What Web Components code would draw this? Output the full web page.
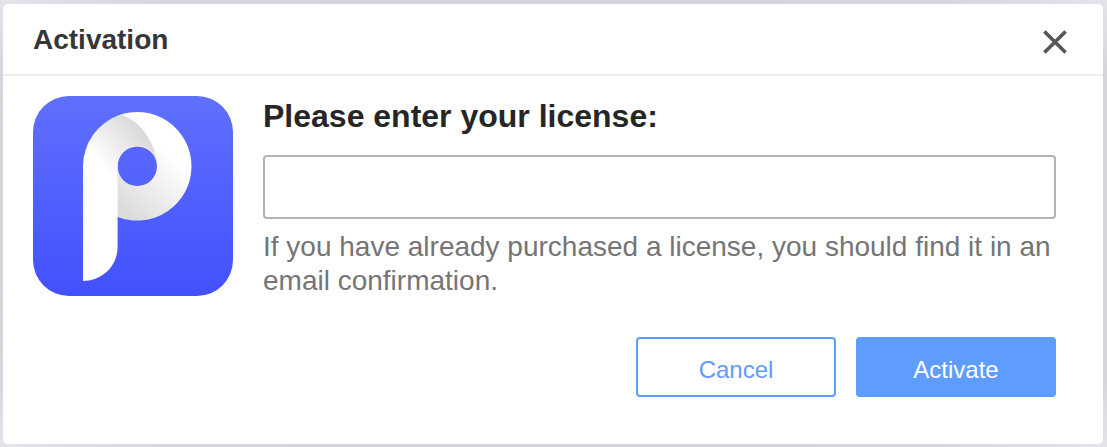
<!DOCTYPE html>
<html lang="en">
<head>
  <meta charset="utf-8">
  <meta name="viewport" content="width=device-width, initial-scale=1">
  <title>Activation</title>
  <style>
    html {
      height: 100%;
    }

    body {
      box-sizing: border-box;
      min-height: 100%;
      margin: 0;
      padding: 4px 4px 3px 3px;
      display: flex;
      background: radial-gradient(ellipse at center, #d2d2d7 0%, #d6d5db 85%, #e6e4ea 100%);
      font-family: "Liberation Sans", Helvetica, Arial, sans-serif;
    }

    modal-dialog {
      flex: 1;
    }
  </style>
</head>
<body>
  <modal-dialog title="Activation">
    <app-logo slot="icon"></app-logo>
    <license-field
      label="Please enter your license:"
      hint="If you have already purchased a license, you should find it in an email confirmation.">
    </license-field>
    <action-button slot="actions">Cancel</action-button>
    <action-button slot="actions" primary>Activate</action-button>
  </modal-dialog>

  <script>
    class ModalDialog extends HTMLElement {
      constructor() {
        super();
        this.attachShadow({ mode: 'open' });

        const title = this.getAttribute('title') || '';
        this.removeAttribute('title');

        this.shadowRoot.innerHTML = `
          <style>
            :host {
              display: block;
              border-radius: 5px;
              background: #fff;
            }
            header {
              display: flex;
              align-items: center;
              justify-content: space-between;
              height: 70px;
              padding: 0 32px 0 30px;
              border-bottom: 2px solid #ededee;
            }
            h1 {
              margin: 2px 0 0;
              color: #363636;
              font-size: 28px;
              line-height: 32px;
            }
            .close {
              display: flex;
              margin-top: 6px;
              padding: 0;
              border: 0;
              background: none;
              color: #55555c;
              cursor: pointer;
            }
            .content {
              display: flex;
              gap: 30px;
              padding: 20px 47px 0 30px;
            }
            .main {
              flex: 1;
              min-width: 0;
            }
            footer {
              display: flex;
              justify-content: flex-end;
              gap: 20px;
              padding: 39px 47px 47px;
            }
          </style>
          <section role="dialog" aria-labelledby="title">
            <header>
              <h1 id="title">${title}</h1>
              <button class="close" type="button" aria-label="Close">
                <svg width="32" height="32" viewBox="0 0 32 32" fill="none" stroke="currentColor" stroke-width="3.6">
                  <path d="M5.4 5.4 26.6 26.6M26.6 5.4 5.4 26.6"/>
                </svg>
              </button>
            </header>
            <div class="content">
              <slot name="icon"></slot>
              <div class="main"><slot></slot></div>
            </div>
            <footer><slot name="actions"></slot></footer>
          </section>
        `;
      }

      connectedCallback() {
        this.shadowRoot.querySelector('.close').addEventListener('click', () => {
          this.remove();
        });
      }
    }

    class AppLogo extends HTMLElement {
      constructor() {
        super();
        this.attachShadow({ mode: 'open' });
        this.shadowRoot.innerHTML = `
          <style>
            :host {
              display: block;
              flex: none;
            }
            svg {
              display: block;
            }
          </style>
          <svg width="200" height="200" viewBox="0 0 200 200" aria-hidden="true">
            <defs>
              <linearGradient id="tile" x1="0" y1="0" x2="0" y2="1">
                <stop offset="0" stop-color="#5f70fd"/>
                <stop offset="1" stop-color="#4351fd"/>
              </linearGradient>
              <linearGradient id="bowl" gradientUnits="userSpaceOnUse" x1="94" y1="116" x2="142" y2="64">
                <stop offset="0" stop-color="#dcdcdc"/>
                <stop offset="1" stop-color="#fff"/>
              </linearGradient>
              <linearGradient id="stem" gradientUnits="userSpaceOnUse" x1="112" y1="38" x2="72" y2="74">
                <stop offset="0" stop-color="#d9d9d9"/>
                <stop offset="1" stop-color="#fff"/>
              </linearGradient>
            </defs>
            <rect width="200" height="200" rx="36" fill="url(#tile)"/>
            <path fill="url(#bowl)" d="M84 19.9A54.3 54.3 0 1 1 84 120.7V70.3H84.6A19.7 19.7 0 1 0 124 70.3A19.7 19.7 0 0 0 84.6 70.3H84Z"/>
            <path fill="url(#stem)" d="M50 185V70.3A54.3 54.3 0 0 1 88 18.5C108 25 123 48 124 69A19.7 19.7 0 0 0 84.6 70.3V151C84.6 170 69 185 50 185Z"/>
          </svg>
        `;
      }
    }

    class LicenseField extends HTMLElement {
      constructor() {
        super();
        this.attachShadow({ mode: 'open' });

        const label = this.getAttribute('label') || '';
        const hint = this.getAttribute('hint') || '';

        this.shadowRoot.innerHTML = `
          <style>
            :host {
              display: block;
            }
            label {
              display: block;
              color: #262626;
              font-size: 32px;
              font-weight: bold;
              line-height: 40px;
            }
            input {
              display: block;
              box-sizing: border-box;
              width: 100%;
              height: 64px;
              margin: 19px 0 11px;
              padding: 0 16px;
              border: 2px solid #b3b3b3;
              border-radius: 4px;
              background: #fff;
              color: #262626;
              font: inherit;
              font-size: 28px;
            }
            p {
              margin: 0;
              color: #757575;
              font-size: 28px;
              line-height: 34px;
            }
          </style>
          <label for="license">${label}</label>
          <input id="license" type="text" autocomplete="off" aria-describedby="hint">
          <p id="hint">${hint}</p>
        `;
      }
    }

    class ActionButton extends HTMLElement {
      constructor() {
        super();
        this.attachShadow({ mode: 'open' });
        this.shadowRoot.innerHTML = `
          <style>
            :host {
              display: block;
            }
            button {
              display: block;
              min-width: 200px;
              height: 60px;
              padding: 6px 24px 0;
              border: 2px solid #5e9cff;
              border-radius: 4px;
              background: #fff;
              color: #5e9cff;
              font: inherit;
              font-size: 24px;
              cursor: pointer;
            }
            :host([primary]) button {
              background: #5e9cff;
              color: #fff;
            }
          </style>
          <button type="button"><slot></slot></button>
        `;
      }
    }

    customElements.define('modal-dialog', ModalDialog);
    customElements.define('app-logo', AppLogo);
    customElements.define('license-field', LicenseField);
    customElements.define('action-button', ActionButton);
  </script>
</body>
</html>
